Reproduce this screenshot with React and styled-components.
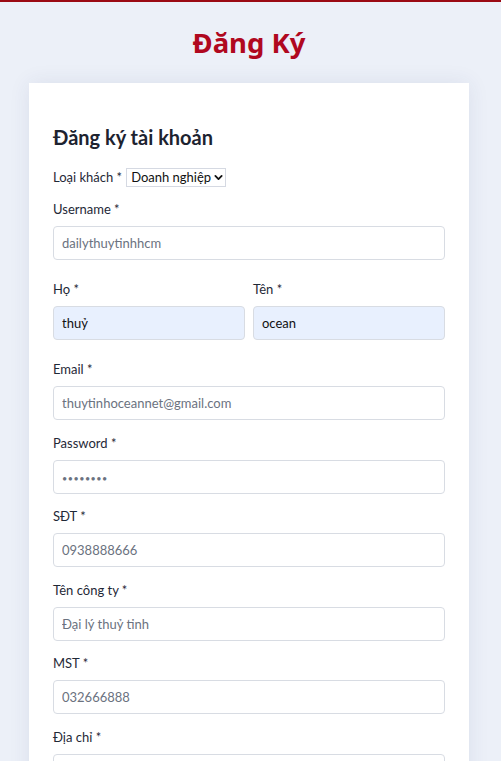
import React from 'react';
import styled, { createGlobalStyle } from 'styled-components';

const GlobalStyle = createGlobalStyle`
  html, body {
    margin: 0;
    padding: 0;
  }
  body {
    background: #ecf0f8;
    font-family: Lato, "Noto Sans", sans-serif;
    color: #1f2937;
  }
`;

const S = {};

S.Page = styled.div`
  min-height: 100vh;
  border-top: 2px solid #9b0a14;
  box-sizing: border-box;
`;

S.Wrap = styled.div`
  width: 440px;
  margin-left: 29px;
`;

S.Title = styled.h1`
  margin: 0;
  padding: 23px 0 22px;
  text-align: center;
  font-family: "Noto Sans", sans-serif;
  font-size: 27.5px;
  line-height: 36px;
  font-weight: 700;
  color: #b0081f;
`;

S.Card = styled.div`
  box-sizing: border-box;
  background: #ffffff;
  padding: 40px 24px 24px;
  box-shadow: 0 0 20px rgba(40, 60, 110, 0.09);
`;

S.Heading = styled.h2`
  margin: 0 0 16px;
  font-size: 20px;
  line-height: 28px;
  font-weight: 700;
  color: #1d2330;
`;

S.TypeRow = styled.div`
  display: flex;
  align-items: center;
  gap: 4px;
  font-size: 13px;
  line-height: 20px;
  color: #1f2937;
  margin-bottom: 12px;
`;

S.SelectBox = styled.div`
  display: inline-flex;
  align-items: center;
  height: 19px;
  box-sizing: border-box;
  border: 1px solid #d5d9e2;
  padding: 0 2px 0 4px;
  gap: 2px;

  select {
    appearance: none;
    border: 0;
    outline: none;
    background: transparent;
    font: inherit;
    font-size: 13px;
    color: #111;
    padding: 0;
    margin: 0;
  }
`;

S.Group = styled.div`
  margin-bottom: ${p => p.$gap || 12.5}px;
`;

S.Row = styled.div`
  display: grid;
  grid-template-columns: 1fr 1fr;
  gap: 8px;
  margin-bottom: ${p => p.$gap || 12.5}px;
`;

S.Label = styled.label`
  display: block;
  font-size: 13px;
  line-height: 20px;
  margin-bottom: 7px;
  color: #1f2937;
`;

S.Input = styled.input`
  display: block;
  width: 100%;
  height: 34px;
  box-sizing: border-box;
  border: 1px solid #d8dce3;
  border-radius: 4px;
  padding: 0 8px;
  font: inherit;
  font-size: 13px;
  color: #111;
  background: ${p => (p.$filled ? '#e8f0fe' : '#ffffff')};
  outline: none;

  &::placeholder {
    color: #6b7280;
    font-size: ${p => (p.$dots ? '9px' : '13px')};
    letter-spacing: ${p => (p.$dots ? '0.5px' : 'normal')};
  }
`;

const Chevron = () => (
  <svg width="9" height="9" viewBox="0 0 10 10">
    <path d="M1.5 3.2 L5 6.7 L8.5 3.2" fill="none" stroke="#111" strokeWidth="2" strokeLinecap="round" strokeLinejoin="round" />
  </svg>
);

const Field = ({ label, placeholder, type = 'text', gap, dots }) => (
  <S.Group $gap={gap}>
    <S.Label>{label} *</S.Label>
    <S.Input type={type} placeholder={placeholder} $dots={dots} />
  </S.Group>
);

export default function App() {
  return (
    <S.Page>
      <GlobalStyle />
      <S.Wrap>
        <S.Title>Đăng Ký</S.Title>
        <S.Card>
          <S.Heading>Đăng ký tài khoản</S.Heading>
          <S.TypeRow>
            <span>Loại khách *</span>
            <S.SelectBox>
              <select defaultValue="dn">
                <option value="dn">Doanh nghiệp</option>
                <option value="cn">Cá nhân</option>
              </select>
              <Chevron />
            </S.SelectBox>
          </S.TypeRow>
          <Field label="Username" placeholder="dailythuytinhhcm" gap={19} />
          <S.Row $gap={19}>
            <div>
              <S.Label>Họ *</S.Label>
              <S.Input $filled defaultValue="thuỷ" />
            </div>
            <div>
              <S.Label>Tên *</S.Label>
              <S.Input $filled defaultValue="ocean" />
            </div>
          </S.Row>
          <Field label="Email" placeholder="thuytinhoceannet@gmail.com" />
          <Field label="Password" placeholder="••••••••" dots />
          <Field label="SĐT" placeholder="0938888666" />
          <Field label="Tên công ty" placeholder="Đại lý thuỷ tinh" />
          <Field label="MST" placeholder="032666888" />
          <Field label="Địa chỉ" placeholder="" />
        </S.Card>
      </S.Wrap>
    </S.Page>
  );
}
